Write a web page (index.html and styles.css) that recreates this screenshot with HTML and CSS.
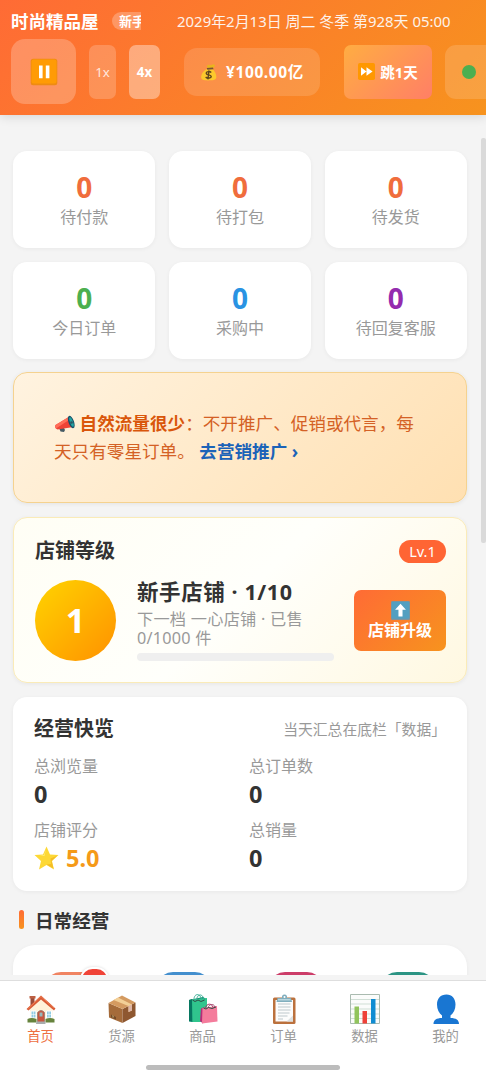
FILE: index.html
```html
<!DOCTYPE html>
<html lang="zh-CN">
<head>
<meta charset="utf-8">
<meta name="viewport" content="width=device-width, initial-scale=1">
<title>时尚精品屋</title>
<link rel="stylesheet" href="styles.css">
</head>
<body>
<div class="app">
  <header class="header">
    <div class="header-top">
      <span class="shop-name">时尚精品屋</span>
      <span class="shop-tag"><span class="tag-text">新手</span></span>
      <span class="date">2029年2月13日 周二 冬季 第928天 05:00</span>
    </div>
    <div class="controls">
      <button class="pause" aria-label="暂停">
        <svg width="28" height="28" viewBox="0 0 28 28"><rect x=".7" y=".7" width="26.6" height="26.6" rx="2.5" fill="#ef8b12"/><rect x="1.5" y="1.5" width="25" height="24" rx="2" fill="#ff9b05"/><path d="M9 7.5h3.6v12.7H9zM15.8 7.5h3.6v12.7h-3.6z" fill="#fff"/></svg>
      </button>
      <button class="speed">1x</button>
      <button class="speed speed-on">4x</button>
      <div class="money">
        <svg width="18" height="18" viewBox="0 0 32 32"><path d="M14 10 12 5l3-2 4 1 5-2 3 2-4 6z" fill="#e9b51e"/><path d="M13 10C7 13 2 19 2 25c0 5 4 6 12 6s15 0 15-6c0-6-3-11-7-15z" fill="#fcc82c"/><path d="m12 9 11-1 1 3-11 1z" fill="#795036"/><path d="M20 17c-3-3-9-2-9 1 0 4 9 2 9 6 0 3-6 4-10 1M16 13l-2 16" fill="none" stroke="#60461d" stroke-width="2.5"/></svg>
        <span class="money-text">¥100.00亿</span>
      </div>
      <button class="skip">
        <svg width="17" height="17" viewBox="0 0 28 28"><rect width="28" height="28" rx="3" fill="#ff9800"/><path d="m5 7 9 7-9 7zM14 7l10 7-10 7z" fill="#fff"/></svg>
        <span>跳1天</span>
      </button>
      <button class="status" aria-label="状态"><span class="dot"></span></button>
    </div>
  </header>

  <main class="content">
    <div class="stats">
      <div class="stat"><b class="stat-num orange">0</b><span class="stat-label">待付款</span></div>
      <div class="stat"><b class="stat-num orange">0</b><span class="stat-label">待打包</span></div>
      <div class="stat"><b class="stat-num orange">0</b><span class="stat-label">待发货</span></div>
      <div class="stat"><b class="stat-num green">0</b><span class="stat-label">今日订单</span></div>
      <div class="stat"><b class="stat-num blue">0</b><span class="stat-label">采购中</span></div>
      <div class="stat"><b class="stat-num purple">0</b><span class="stat-label">待回复客服</span></div>
    </div>

    <section class="notice">
      <p class="notice-text"><svg class="horn" width="21" height="18" viewBox="0 0 42 36"><path d="m10 26 3 7 7 1 2-4-3-6z" fill="#455a64"/><path d="M3 20 31 3l8 21-32 5c-4-1-6-6-4-9z" fill="#ee4336"/><path d="m3 20 28-17 2 5-29 19c-2-2-2-5-1-7z" fill="#ff6d58"/><ellipse cx="34.5" cy="14" rx="5.5" ry="13" transform="rotate(-20 34.5 14)" fill="#174f68"/><ellipse cx="35" cy="14" rx="3" ry="10" transform="rotate(-20 35 14)" fill="#24a5a2"/><circle cx="35" cy="15" r="2.6" fill="#315464"/></svg> <b>自然流量很少</b>：不开推广、促销或代言，每<br>天只有零星订单。 <a class="notice-link">去营销推广 ›</a></p>
    </section>

    <section class="level">
      <div class="level-head"><h2 class="card-title">店铺等级</h2><span class="level-badge">Lv.1</span></div>
      <div class="level-body">
        <div class="medal">1</div>
        <div class="level-info">
          <h3 class="level-name">新手店铺 · 1/10</h3>
          <p class="level-next">下一档 一心店铺 · 已售<br>0/1000 件</p>
          <div class="progress"></div>
        </div>
        <button class="upgrade">
          <svg width="19" height="19" viewBox="0 0 28 28"><rect width="28" height="28" rx="2" fill="#81929a"/><rect x="1" y="1" width="26" height="25" rx="2" fill="#539fc0"/><path d="m14 4 8 9h-5v10h-6V13H6z" fill="#fff"/></svg>
          <span>店铺升级</span>
        </button>
      </div>
    </section>

    <section class="overview">
      <div class="overview-head"><h2 class="card-title">经营快览</h2><span class="overview-note">当天汇总在底栏「数据」</span></div>
      <div class="metrics">
        <div class="metric"><span class="metric-label">总浏览量</span><b class="metric-num">0</b></div>
        <div class="metric"><span class="metric-label">总订单数</span><b class="metric-num">0</b></div>
        <div class="metric"><span class="metric-label">店铺评分</span><b class="metric-num rating"><svg width="25" height="24" viewBox="0 0 50 48"><path d="m25 1 7 16 17 1-13 12 4 17-15-9-15 9 4-17L1 18l17-1z" fill="#fdd835"/><path d="m33 25 14-6-12 11 4 15-14-8 9-1z" fill="#f4bd27"/><path d="m24 6-4 12-9 1 10 1z" fill="#ffef78"/></svg>5.0</b></div>
        <div class="metric"><span class="metric-label">总销量</span><b class="metric-num">0</b></div>
      </div>
    </section>

    <h2 class="section-title"><i class="bar"></i>日常经营</h2>
    <section class="shortcuts">
      <div class="shortcut tile-orange"><i class="tile-badge"></i></div>
      <div class="shortcut tile-blue"></div>
      <div class="shortcut tile-pink"></div>
      <div class="shortcut tile-teal"></div>
    </section>
  </main>
  <div class="scrollbar"></div>

  <nav class="nav">
    <div class="tabs">
      <a class="tab tab-on"><svg class="tab-icon" viewBox="0 0 60 60"><path d="M9 7h8v16H9z" fill="#9a4b38"/><path d="M7 4h12v5H7z" fill="#bd6043"/><path d="M8 29 31 8l22 21v27H8z" fill="#fff2d9"/><path d="M1 30 30 3l29 26-3 4L30 11 5 33z" fill="#d95b36"/><path d="m4 29 26-24 26 23" fill="none" stroke="#ed8054" stroke-width="2"/><path d="M10 34h10v14H10zM41 34h10v14H41z" fill="#91cce1" stroke="#fff" stroke-width="2"/><path d="M15 34v14M46 34v14M10 41h10M41 41h10" stroke="#fff"/><path d="M23 57V37q7-8 14 0v20z" fill="#c8553d" stroke="#a38378" stroke-width="2"/><path d="M27 37h6v8h-6z" fill="#94b9bb"/><path d="M3 50q8-4 18 0v7H3zM39 50q9-4 18 0v7H39z" fill="#66833d"/><path d="M21 55h18v5H20z" fill="#a7acad"/></svg><span>首页</span></a>
      <a class="tab"><svg class="tab-icon" viewBox="0 0 60 60"><path d="M3 18 31 30v28L4 47z" fill="#a56b3a"/><path d="m31 30 26-13v27L31 58z" fill="#8e5730"/><path d="M3 18 30 3l27 14-26 13z" fill="#d49a60"/><path d="m13 12 9-5 28 14v12l-7 3V24z" fill="#f3cf96"/><path d="m43 24 7-3v12l-7 3z" fill="#ddb6a8"/><path d="m8 41 10 5v5L8 47z" fill="#754b28"/><path d="m10 43 4 2m-2-1v4" stroke="#baa06c" stroke-width="1.5"/></svg><span>货源</span></a>
      <a class="tab"><svg class="tab-icon" viewBox="0 0 60 60"><path d="m2 12 28-6 8 5v45L9 56l-7-1z" fill="#138b72"/><path d="m8 11 30-3v48L9 56z" fill="#30c58d"/><path d="M2 12 8 10v45l-6-1z" fill="#077861"/><path d="M12 15C10-3 26-3 27 13M17 15c0-17 13-17 16-2" fill="none" stroke="#39ad94" stroke-width="2"/><path d="m26 29 7-3-3 33-6-5z" fill="#b92b79"/><path d="m29 28 29-4 1 31-31 4z" fill="#f47c9c"/><path d="M35 28c2-10 13-10 15-1M40 28c2-9 12-9 14-2" fill="none" stroke="#9b315c" stroke-width="1.8"/><path d="m9 12 5 3 6-3 6 3 7-3M31 28l5 2 5-3 7 2 8-3" fill="none" stroke="#304e46" stroke-width="2"/></svg><span>商品</span></a>
      <a class="tab"><svg class="tab-icon" viewBox="0 0 60 60"><rect x="8" y="7" width="45" height="53" rx="3" fill="#bb713d"/><path d="M13 12h35v43H13z" fill="#fcfcfc"/><path d="M35 55h13V43z" fill="#dce1e2"/><path d="M18 20h25M18 26h25M18 32h25M18 38h23M18 44h19M18 50h10" stroke="#aebbc0" stroke-width="1.6"/><path d="M17 8h9q-1-7 5-7t5 7h8l2 8H15z" fill="#81aebd"/><path d="M18 10h25v3H18z" fill="#b9d7de"/><circle cx="31" cy="6" r="2" fill="#fff"/></svg><span>订单</span></a>
      <a class="tab"><svg class="tab-icon" viewBox="0 0 60 60"><path d="M1 1h58v58H1z" fill="#fbfcfb" stroke="#aabbb0" stroke-width="2"/><path d="M2 11h56M2 20h56M2 30h56M2 40h56M2 49h56" stroke="#bed2c5" stroke-width="1.4"/><path d="M9 25h9v34H9z" fill="#91c45c"/><path d="M25 34h9v25h-9z" fill="#ee4139"/><path d="M42 10h9v49h-9z" fill="#108cd2"/></svg><span>数据</span></a>
      <a class="tab"><svg class="tab-icon" viewBox="0 0 60 60"><path d="M31 1C19 1 12 9 12 21c0 10 4 17 10 22v5C11 48 5 52 5 60h51c0-8-6-12-17-12v-5c6-5 10-12 10-22C49 9 42 1 31 1z" fill="#1976d2"/></svg><span>我的</span></a>
    </div>
    <div class="home-bar"></div>
  </nav>
</div>
</body>
</html>
```
FILE: styles.css
```css
* { box-sizing: border-box; }
body {
  margin: 0;
  font-family: "Noto Sans", "Noto Sans CJK SC", sans-serif;
  color: #333;
  background: #f4f4f4;
}
button { border: 0; padding: 0; font: inherit; color: #fff; flex: none; }
h2, h3, p { margin: 0; }
svg { display: block; flex: none; }
.app {
  position: relative;
  display: flex;
  flex-direction: column;
  height: 1080px;
  overflow: hidden;
  white-space: nowrap;
}
.header {
  flex: none;
  height: 115px;
  overflow: hidden;
  color: #fff;
  background: linear-gradient(135deg, #ff6b35, #f7931e);
  position: relative;
  box-shadow: 0 2px 10px rgba(0, 0, 0, .12);
}
.header-top { display: flex; align-items: center; height: 39px; padding: 2px 0 0 11px; }
.shop-name { width: 101px; font-size: 17.5px; font-weight: 700; line-height: 22px; }
.shop-tag {
  width: 29px;
  height: 18px;
  overflow: hidden;
  padding-left: 7px;
  border-radius: 9px 0 0 9px;
  background: rgba(255, 255, 255, .25);
  font-size: 13px;
  font-weight: 700;
  line-height: 18px;
}
.tag-text { display: block; }
.date { margin-left: 36px; font-size: 14.95px; line-height: 22px; opacity: .9; }
.controls { display: flex; align-items: center; height: 65px; padding-left: 11px; }
.pause {
  display: grid;
  place-items: center;
  width: 65px;
  height: 65px;
  border-radius: 14px;
  background: rgba(255, 255, 255, .23);
}
.speed {
  width: 27px;
  height: 54px;
  margin-left: 13px;
  border-radius: 7px;
  background: rgba(255, 255, 255, .2);
  font-size: 13.3px;
  color: rgba(255, 255, 255, .8);
}
.speed-on { width: 31px; background: rgba(255, 255, 255, .38); color: #fff; font-weight: 700; }
.money {
  display: flex;
  align-items: center;
  gap: 8px;
  flex: none;
  width: 136px;
  height: 48px;
  margin-left: 24px;
  padding-left: 16px;
  border-radius: 13px;
  background: rgba(255, 255, 255, .14);
}
.money-text { font-size: 15.5px; font-weight: 700; letter-spacing: .6px; }
.skip {
  display: flex;
  align-items: center;
  justify-content: center;
  gap: 5px;
  width: 88px;
  height: 54px;
  margin-left: 24px;
  border-radius: 7px;
  background: linear-gradient(135deg, #ffad42, #ff7f66);
  font-size: 14.5px;
  font-weight: 700;
}
.status {
  display: flex;
  align-items: center;
  width: 80px;
  height: 54px;
  margin-left: 13px;
  padding-left: 17px;
  border-radius: 11px;
  background: rgba(255, 255, 255, .15);
}
.dot { width: 14px; height: 14px; border-radius: 50%; background: #4caf50; }

.content { flex: none; height: 860px; overflow: hidden; padding: 36px 19px 0 13px; }
.stats { display: grid; grid-template-columns: repeat(3, 1fr); gap: 13.5px; }
.stat {
  display: flex;
  flex-direction: column;
  align-items: center;
  height: 97px;
  padding-top: 19px;
  border-radius: 14px;
  background: #fff;
  box-shadow: 0 1px 4px rgba(0, 0, 0, .05);
}
.stat-num { font-size: 28px; line-height: 34px; }
.stat-label { font-size: 16px; line-height: 27px; color: #999; }
.orange { color: #f06d3c; }
.green { color: #4caf50; }
.blue { color: #2993e3; }
.purple { color: #942bae; }
.notice {
  height: 131px;
  margin-top: 13.5px;
  padding: 36px 0 0 40px;
  border: 1.5px solid #f5d28f;
  border-radius: 14px;
  background: linear-gradient(135deg, #fff3e0, #ffe0b2);
  box-shadow: 0 1px 4px rgba(0, 0, 0, .07);
}
.notice-text { font-size: 17.6px; line-height: 28px; color: #d46125; }
.notice-text b { color: #d9560b; }
.horn { display: inline-block; vertical-align: -3px; }
.notice-link { color: #1b63b8; font-weight: 700; }
.level {
  height: 166px;
  margin-top: 14px;
  padding: 18px 20px 0 21px;
  border: 1.5px solid #faebb8;
  border-radius: 14px;
  background: linear-gradient(135deg, #fffef5, #fffffb 50%, #fff8e1);
  box-shadow: 0 1px 4px rgba(0, 0, 0, .06);
}
.level-head, .overview-head { display: flex; align-items: center; justify-content: space-between; }
.level-head { height: 30px; }
.card-title { font-size: 20px; line-height: 30px; }
.level-badge {
  width: 47px;
  height: 23px;
  border-radius: 12px;
  background: #ff6534;
  color: #fff;
  font-size: 14.5px;
  line-height: 23px;
  text-align: center;
}
.level-body { display: flex; height: 91px; align-items: center; margin-top: 9px; }
.medal {
  flex: none;
  width: 81px;
  height: 81px;
  border-radius: 50%;
  background: linear-gradient(135deg, #ffd400, #ff9100);
  color: #fff;
  font-size: 34px;
  font-weight: 700;
  line-height: 81px;
  text-align: center;
}
.level-info { width: 197px; margin-left: 21px; padding-bottom: 4px; flex: none; }
.level-name { font-size: 21.5px; line-height: 30px; margin-bottom: 3px; letter-spacing: .6px; }
.level-next { font-size: 16.2px; line-height: 19px; letter-spacing: .25px; color: #999; }
.progress { height: 8px; margin-top: 5px; border-radius: 4px; background: #efefef; }
.upgrade {
  display: flex;
  flex-direction: column;
  align-items: center;
  justify-content: center;
  width: 92px;
  height: 61px;
  margin-left: 20px;
  border-radius: 7px;
  background: linear-gradient(135deg, #ff6b35, #f7931e);
  font-size: 16px;
  font-weight: 700;
  line-height: 21px;
}
.overview {
  height: 194px;
  margin-top: 14px;
  padding: 17px 21px 0 21px;
  border-radius: 14px;
  background: #fff;
  box-shadow: 0 1px 4px rgba(0, 0, 0, .05);
}
.overview-note { font-size: 14.8px; line-height: 26px; color: #999; }
.metrics { display: grid; grid-template-columns: 215px 1fr; grid-auto-rows: 63.5px; margin-top: 9px; }
.metric { display: flex; flex-direction: column; }
.metric-label { font-size: 16px; line-height: 26px; color: #999; }
.metric-num { display: flex; align-items: center; font-size: 23.5px; line-height: 31px; }
.rating { gap: 7px; color: #f59a18; }
.section-title {
  display: flex;
  align-items: center;
  gap: 11px;
  height: 28px;
  margin-top: 14.5px;
  padding-left: 6px;
  font-size: 18.6px;
}
.bar { width: 5px; height: 19px; border-radius: 3px; background: linear-gradient(#ff6b35, #f7931e); }
.shortcuts {
  display: grid;
  grid-template-columns: repeat(4, 1fr);
  justify-items: center;
  height: 120px;
  margin-top: 11px;
  padding: 27px 3px 0;
  border-radius: 22px;
  background: #fff;
  box-shadow: 0 1px 4px rgba(0, 0, 0, .05);
}
.shortcut { position: relative; width: 54px; height: 54px; border-radius: 16px; }
.tile-orange { background: #f08462; }
.tile-blue { background: #438fce; }
.tile-pink { background: #cc3d69; }
.tile-teal { background: #2c9484; }
.tile-badge {
  position: absolute;
  top: -5px;
  right: -10px;
  width: 29px;
  height: 25px;
  border: 2px solid #fff;
  border-radius: 13px;
  background: #f04438;
  box-shadow: 0 0 3px rgba(0, 0, 0, .15);
}
.scrollbar {
  position: absolute;
  top: 138px;
  right: 0;
  width: 5px;
  height: 405px;
  border-radius: 2px;
  background: #dadada;
}
.nav {
  display: flex;
  flex-direction: column;
  align-items: center;
  height: 100px;
  margin-top: 5px;
  border-top: 1px solid #dedede;
  background: #fff;
}
.tabs { display: grid; grid-template-columns: repeat(6, 81px); height: 84px; padding-top: 13px; }
.tab {
  display: flex;
  flex-direction: column;
  align-items: center;
  color: #999;
  font-size: 13.3px;
  line-height: 20px;
}
.tab-on { color: #ee7042; }
.tab-icon { width: 30px; height: 30px; margin-bottom: 2px; }
.home-bar { width: 194px; height: 5px; border-radius: 3px; background: #bcbcbc; }
```
